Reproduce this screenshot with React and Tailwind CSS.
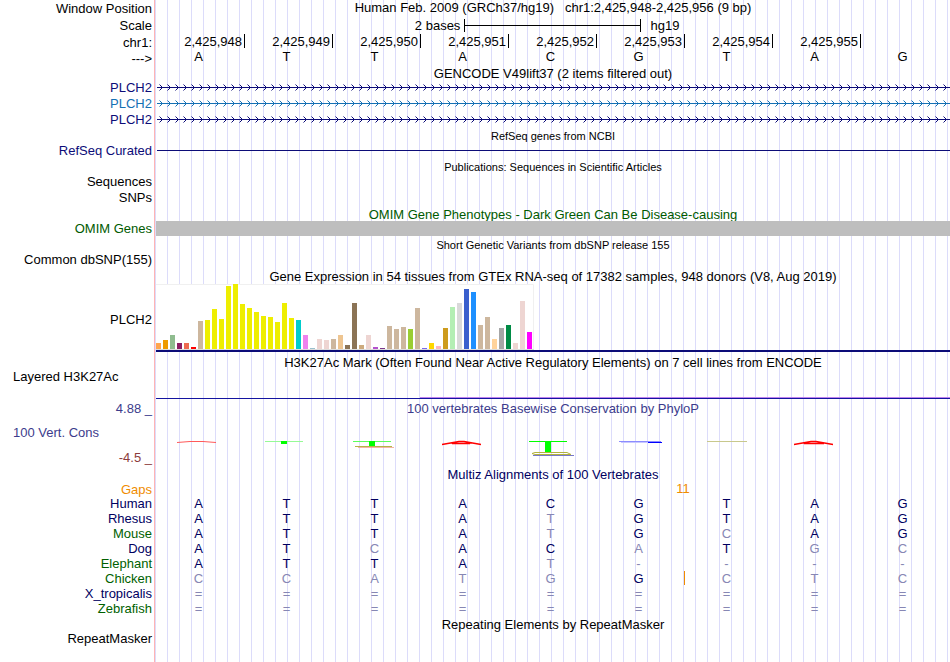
import React from 'react';

const positions = ['2,425,948', '2,425,949', '2,425,950', '2,425,951', '2,425,952', '2,425,953', '2,425,954', '2,425,955'];
const bases = 'ATTACGTAG'.split('');

const genes = [
    { name: 'PLCH2', text: 'text-[#0c0c78]', color: '#0c0c78' },
    { name: 'PLCH2', text: 'text-[#1470b4]', color: '#1470b4' },
    { name: 'PLCH2', text: 'text-[#0c0c78]', color: '#0c0c78' },
];

// [height, color] for every GTEx tissue
const tissues = [
    [6, '#ffa54f'], [9, '#ee9a00'], [14, '#8fbc8f'], [6, '#8b1c62'], [6, '#ee6a50'], [2, '#ff0000'],
    [28, '#cdb79e'], [29, '#eeee00'], [40, '#eeee00'], [30, '#eeee00'], [63, '#eeee00'], [65, '#eeee00'],
    [45, '#eeee00'], [41, '#eeee00'], [37, '#eeee00'], [33, '#eeee00'], [32, '#eeee00'], [27, '#eeee00'],
    [46, '#eeee00'], [31, '#eeee00'], [29, '#00cdcd'], [14, '#ee82ee'], [1, '#9ac0cd'], [10, '#eed5d2'],
    [9, '#eed5d2'], [10, '#cdb79e'], [14, '#eec591'], [4, '#8b7355'], [46, '#8b7355'], [4, '#cdaa7d'],
    [14, '#eed5d2'], [2, '#b452cd'], [1, '#7a378b'], [23, '#cdb79e'], [20, '#cdb79e'], [22, '#cdb79e'],
    [20, '#9acd32'], [41, '#cdb79e'], [1, '#7a67ee'], [6, '#ffd700'], [3, '#ffb6c1'], [21, '#cd9b1d'],
    [42, '#b4eeb4'], [46, '#d9d9d9'], [60, '#3a5fcd'], [57, '#1e90ff'], [24, '#cdb79e'], [32, '#cdb79e'],
    [10, '#ffd39b'], [21, '#a6a6a6'], [24, '#008b45'], [6, '#eed5d2'], [48, '#eed5d2'], [17, '#ff00ff'],
];

// Lower case means the base differs from human and is drawn faded
const species = [
    { name: 'Human', text: 'text-[#00005f]', seq: 'ATTACGTAG' },
    { name: 'Rhesus', text: 'text-[#00005f]', seq: 'ATTAtGTAG' },
    { name: 'Mouse', text: 'text-[#005f00]', seq: 'ATTAtGcAG' },
    { name: 'Dog', text: 'text-[#00005f]', seq: 'ATcACaTgc' },
    { name: 'Elephant', text: 'text-[#005f00]', seq: 'ATTAt----' },
    { name: 'Chicken', text: 'text-[#005f00]', seq: 'ccatgGctc', insertAfter: 5 },
    { name: 'X_tropicalis', text: 'text-[#00005f]', seq: '=========' },
    { name: 'Zebrafish', text: 'text-[#005f00]', seq: '=========' },
];

const Row = ({ height, label, labelClass = '', children }) => (
    <div className={`flex ${height}`}>
        <div className={`flex w-[155px] shrink-0 items-center justify-end border-r border-[#ffb4b4] bg-white pr-0.5 ${labelClass}`}>
            {label}
        </div>
        <div className="ml-px min-w-0 flex-1">{children}</div>
    </div>
);

const Title = ({ height = 'h-4', className = 'text-[13px]', label, labelClass, children }) => (
    <Row height={height} label={label} labelClass={labelClass}>
        <h2 className={`flex h-full items-center justify-center whitespace-pre ${className}`}>{children}</h2>
    </Row>
);

const GeneLine = ({ id, color }) => (
    <svg className="block h-4 w-full" aria-hidden="true">
        <defs>
            <pattern id={id} x="2" width="8" height="16" patternUnits="userSpaceOnUse">
                <path d="M1.5 5.5 L4.5 8.5 L1.5 11.5" fill="none" stroke={color} strokeWidth="1" />
            </pattern>
        </defs>
        <rect x="1" y="8" width="100%" height="1" fill={color} />
        <rect x="1" y="0" width="100%" height="16" fill={`url(#${id})`} />
    </svg>
);

const Expression = () => (
    <svg className="block h-[68px] w-full" aria-hidden="true">
        <rect x="0" y="0" width="378" height="66" fill="#fff" />
        <path d="M0 0.5 H377.5 V65.5 H0" fill="none" stroke="#f0f0f0" />
        <rect x="0" y="65" width="378" height="1" fill="#dcdcdc" />
        {tissues.map(([height, color], i) => (
            <rect key={i} x={i * 7} y={65 - height} width="5" height={height} fill={color} />
        ))}
        <rect x="0" y="66" width="100%" height="2" fill="#0c0c78" />
    </svg>
);

const Conservation = () => (
    <svg className="block h-[49px] w-full" fill="none" aria-hidden="true">
        <path d="M21 25.5 L34 24.5 H47 L60 25.5" stroke="#ff5a5a" />

        <path d="M109 24.5 H147" stroke="#96fa96" />
        <rect x="125" y="24" width="6" height="3" fill="#00ff00" />

        <path d="M197 24.5 H235" stroke="#5aff5a" />
        <rect x="213" y="24" width="6" height="5" fill="#00ff00" />
        <path d="M199 29.5 H236" stroke="#b4b446" />
        <path d="M202 30.5 H238" stroke="#f09682" strokeOpacity="0.7" />

        <path d="M286 27.5 L303 24.5 H308 L325 27.5 M296 26.5 H314" stroke="#ff0000" strokeWidth="1.3" />

        <path d="M373 24.5 H411" stroke="#00ff00" />
        <rect x="389" y="24" width="6" height="11" fill="#00ff00" />
        <path d="M411 35.5 H379 L376 36.5 L379 37.5 H415 L411 35.5" stroke="#b4b43c" />
        <path d="M377 38.5 H418" stroke="#7878c8" />

        <path d="M463 24.5 H505" stroke="#8c8cff" />
        <path d="M465 25.5 H496" stroke="#c8c8ff" />
        <path d="M492 25.5 H506" stroke="#0000ff" />

        <path d="M551 24.5 H591" stroke="#c8c88c" />

        <path d="M638 27.5 L655 24.5 H660 L677 27.5 M648 26.5 H668" stroke="#ff0000" strokeWidth="1.3" />
    </svg>
);

const Alignment = () => (
    <div className="pr-[3px]">
        <table className="w-full table-fixed border-separate border-spacing-0">
            <tbody>
                {species.map(({ name, text, seq, insertAfter }) => (
                    <tr key={name} className="h-[15px]">
                        <th scope="row" className={`w-[155px] border-r border-[#ffb4b4] bg-white p-0 pr-0.5 text-right font-normal ${text}`}>
                            {name}
                        </th>
                        {seq.split('').map((base, i) => (
                            <td
                                key={i}
                                className={`relative p-0 pr-px text-center ${/[A-Z]/.test(base) ? 'text-[#00005f]' : 'text-[#8787b4]'}`}
                            >
                                {base.toUpperCase()}
                                {insertAfter === i && <span className="absolute top-0 -right-0.5 h-3.5 w-px bg-[#f08c00]" />}
                            </td>
                        ))}
                    </tr>
                ))}
            </tbody>
        </table>
    </div>
);

const App = () => {
    return (
        <main className="flex min-h-screen flex-col overflow-hidden bg-white bg-[repeating-linear-gradient(to_right,transparent_0px,transparent_11px,#dcdcfa_11px,#dcdcfa_12px)] font-['Liberation_Sans',Arial,sans-serif] text-[13px] leading-[15px] text-black">
            <Title height="h-[17px]" className="pb-0.5 text-[13px]" label="Window Position">
                {'Human Feb. 2009 (GRCh37/hg19)   chr1:2,425,948-2,425,956 (9 bp)'}
            </Title>
            <Row height="h-[17px]" label="Scale">
                <div className="mr-px grid h-full grid-cols-18 items-center pb-px">
                    <span className="col-span-7 pr-1 text-right">2 bases</span>
                    <div className="col-span-4 flex h-[13px] items-center border-x border-black">
                        <div className="h-px w-full bg-black" />
                    </div>
                    <span className="col-span-7 pl-2.5">hg19</span>
                </div>
            </Row>
            <Row height="h-4" label="chr1:">
                <div className="mx-px grid h-full grid-cols-9 items-start">
                    {positions.map((pos) => (
                        <span key={pos} className="h-3.5 border-r border-black pr-0.5 text-right">{pos}</span>
                    ))}
                </div>
            </Row>
            <Row height="h-4" label="--->">
                <div className="mx-px grid grid-cols-9 text-center leading-[13px]">
                    {bases.map((base, i) => (
                        <span key={i} className="pr-[5px]">{base}</span>
                    ))}
                </div>
            </Row>

            <Title height="h-[13px]" className="pt-0.5 text-[13px]">GENCODE V49lift37 (2 items filtered out)</Title>
            {genes.map((gene, i) => (
                <Row key={i} height="h-4" label={gene.name} labelClass={gene.text}>
                    <GeneLine id={`gene-${i}`} color={gene.color} />
                </Row>
            ))}

            <Title className="pt-0.5 text-[11px]">RefSeq genes from NCBI</Title>
            <Row height="h-[15px]" label="RefSeq Curated" labelClass="text-[#0c0c78]">
                <div className="flex h-full items-center pl-px">
                    <div className="h-px w-full bg-[#0c0c78]" />
                </div>
            </Row>

            <Title height="h-[15px]" className="pt-[3px] text-[11px]">Publications: Sequences in Scientific Articles</Title>
            <Row height="h-4" label="Sequences" />
            <Row height="h-4" label="SNPs" />

            <Title className="pt-0.5 text-[13px] text-[#005a00]">OMIM Gene Phenotypes - Dark Green Can Be Disease-causing</Title>
            <Row height="h-[15px]" label="OMIM Genes" labelClass="text-[#005a00]">
                <div className="h-full bg-[#bebebe]" />
            </Row>

            <Title className="pt-0.5 text-[11px]">Short Genetic Variants from dbSNP release 155</Title>
            <Row height="h-[15px]" label="Common dbSNP(155)" />

            <Title height="h-[17px]" className="pt-0.5 text-[13px]">
                Gene Expression in 54 tissues from GTEx RNA-seq of 17382 samples, 948 donors (V8, Aug 2019)
            </Title>
            <Row height="h-[68px]" label="PLCH2" labelClass="pt-0.5">
                <Expression />
            </Row>

            <Title height="h-[19px]" className="pt-0.5 text-[13px]">
                H3K27Ac Mark (Often Found Near Active Regulatory Elements) on 7 cell lines from ENCODE
            </Title>
            <Row
                height="h-[29px]"
                label={<span className="w-full self-start pl-[13px] leading-[11px]">Layered H3K27Ac</span>}
            >
                <svg className="block h-[29px] w-full" aria-hidden="true">
                    <rect x="264" y="26" width="100%" height="1" fill="#be82f0" />
                    <rect x="0" y="27" width="100%" height="1" fill="#1414a0" />
                </svg>
            </Row>

            <Title height="h-[17px]" className="text-[13px] text-[#3c3c8c]" label="4.88 _" labelClass="text-[#3c3c8c]">
                100 vertebrates Basewise Conservation by PhyloP
            </Title>
            <Row
                height="h-[49px]"
                label={
                    <div className="flex h-full w-full flex-col justify-between pt-2 pb-px">
                        <span className="pl-[13px] text-[#3c3c8c]">100 Vert. Cons</span>
                        <span className="text-right text-[#8c3c3c]">-4.5 _</span>
                    </div>
                }
            >
                <Conservation />
            </Row>

            <Title className="text-[13px] text-[#00005f]">Multiz Alignments of 100 Vertebrates</Title>
            {/* z-10 keeps the descender above the first alignment row */}
            <Row height="h-3.5" label="Gaps" labelClass="relative z-10 text-[#f08c00]">
                <div className="mx-px grid grid-cols-18 leading-[13px] text-[#f08c00]">
                    <span className="col-span-2 col-start-12 pr-1 text-center">11</span>
                </div>
            </Row>
            <Alignment />

            <Title>Repeating Elements by RepeatMasker</Title>
            <Row height="flex-1" label={<span className="self-start leading-[13px]">RepeatMasker</span>} />
        </main>
    );
};

export default App;
